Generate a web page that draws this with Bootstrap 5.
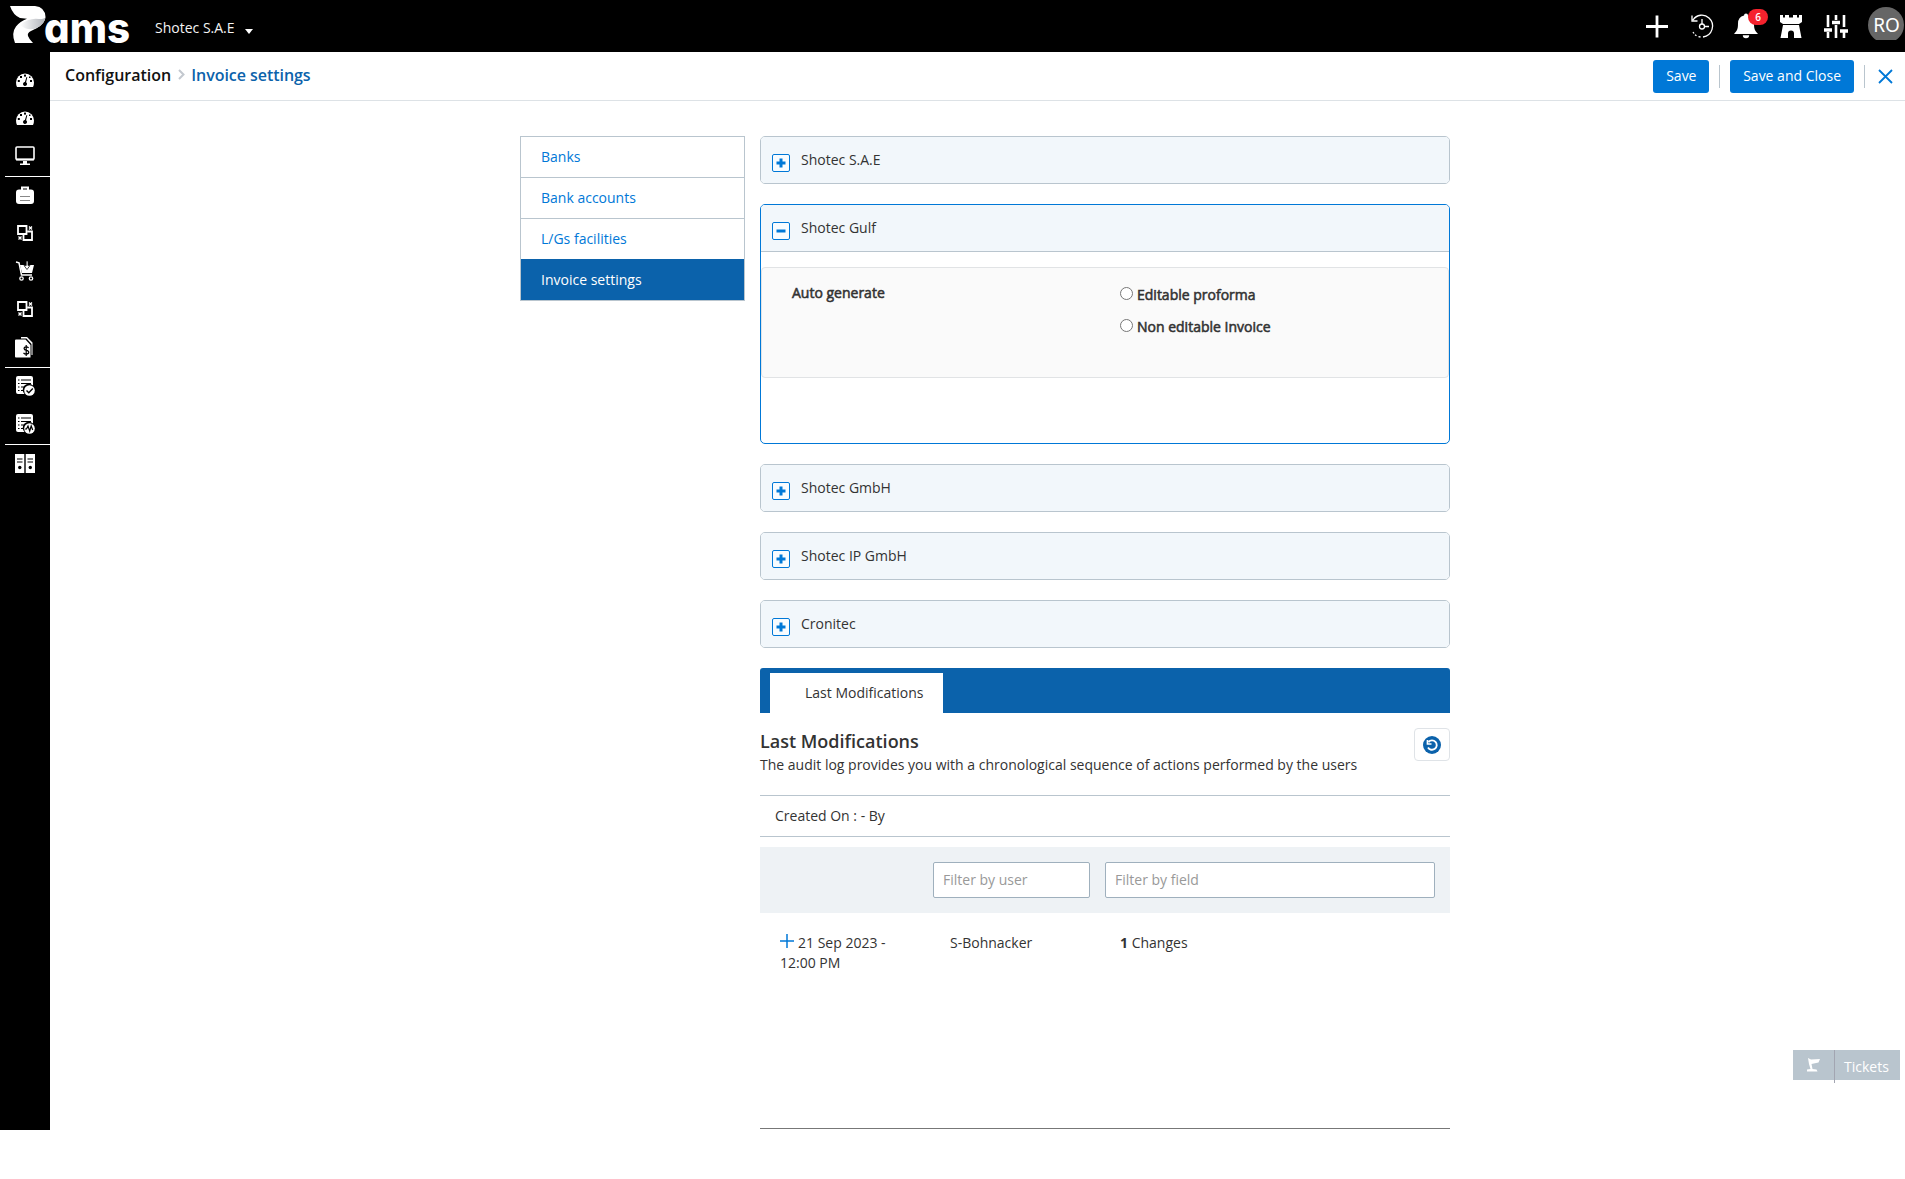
<!DOCTYPE html>
<html lang="en">
<head>
<meta charset="utf-8">
<title>Invoice settings</title>
<link href="https://cdn.jsdelivr.net/npm/bootstrap@5.3.0/dist/css/bootstrap.min.css" rel="stylesheet">
<style>
body{font-family:"Open Sans","Noto Sans",sans-serif;font-size:14px;line-height:20px;color:#333;background:#fff;height:1179px;overflow:hidden}
.topbar{height:52px;background:#000;color:#fff;padding:0 1px 0 11px}
.topbar svg{display:block;flex:none;overflow:visible}
.logo-text{font-family:Inter,"Open Sans",sans-serif;font-weight:800;font-size:41px;font-feature-settings:"cv11";fill:#fff}
.company{margin-left:24px;padding-top:4px;color:#f4f4f4}
.caret{width:0;height:0;border:4.5px solid transparent;border-top:5px solid #fff;border-bottom:0;margin:10px 0 0 10px}
.tools{gap:22px}
.bell{width:24px;margin-left:-1px}
.bell .badge{left:14px;top:-5px;width:20px;height:16px;padding:0;font-size:10px;line-height:16px;font-weight:600;background:#f5222d}
.avatar-ro{width:36px;height:33px;overflow:hidden;margin:-5px 0 0 -2px}
.avatar-ro div{width:36px;height:36px;border-radius:50%;background:#666;font-size:19px;line-height:36px;padding-left:1px;text-align:center;font-family:"Noto Sans",sans-serif}
.shell{height:1078px}
.side{width:50px;height:1078px;background:#000;flex:none;padding-top:9px}
.side a{height:38px;display:flex;align-items:center;justify-content:center}
.side .rule{height:1px;margin-left:5px;background:#fff;position:relative;top:1px}
.crumbs{height:49px;border-bottom:1px solid #dde2e6;padding:0 12px 0 15px;font-size:16px;font-weight:600;color:#111}
.trail{padding-bottom:3px}
.crumbs .here{color:#0b62ab;font-size:16px;letter-spacing:-.05px;padding-top:1px}
.btn-main{background:#0078d7;color:#fff;border-radius:3px;font-size:14px;line-height:20px;padding:6px 13px;border:0;height:33px}
.vline{width:1px;height:23px;background:#b9c5ce}
.content-area{padding:35px 0 0 470px;gap:15px}
.list-group.menu{width:225px;--bs-list-group-border-radius:0;--bs-list-group-border-color:#b9c5ce}
.menu .list-group-item{height:41px;padding:10px 20px 8px;color:#0078d7}
.menu .list-group-item:first-child{height:42px}
.menu .list-group-item.active{background:#0b62ab;color:#fff;border-color:#b9c5ce;margin-top:0;border-top:0}
.menu .list-group-item:nth-child(3){height:40px;border-bottom:0}
.menu .list-group-item:last-child{height:42px;padding-top:11px}
.main-col{width:690px}
.panel{border:1px solid #b9c5ce;border-radius:5px;margin-bottom:20px;overflow:hidden}
.panel-top{height:46px;background:#f2f7fb;padding:0 11px;display:flex}
.panel-top svg{margin:17px 11px 0 0}
.panel-top span{padding-top:13px}
.panel.open{border-color:#0078d7;height:240px}
.open .panel-top{height:47px;border-bottom:1px solid #b9c5ce}
.well-box{margin-top:15px;height:111px;border:1px solid #e1e3e5;border-radius:4px;background:#fafafa;padding:15px 30px}
.fake-bold{-webkit-text-stroke:.55px #333}
.opt{height:32px;display:flex;align-items:flex-start}
.opt input{width:13px;height:13px;margin:4px 4px 0 0}
.opt span{padding-top:2px}
.tabs{height:45px;background:#0b62ab;border-radius:3px 3px 0 0;padding:5px 10px 0}
.tabs a{display:block;width:173px;height:40px;background:#fff;color:#0b62ab;text-decoration:none;padding:10px 0 0 35px}
.h-last{font-size:18px;line-height:24px;font-weight:600;margin:0}
.refresh{width:36px;height:33px;border:1px solid #dfe3e7;border-radius:4px;background:#fff;padding:0;margin-top:-1px}
.created{margin-top:20px;height:42px;border-top:1px solid #b9c5ce;border-bottom:1px solid #b9c5ce;padding:10px 15px}
.filters{margin-top:10px;height:66px;background:#eef2f5;padding:15px 15px 15px 173px;gap:15px}
.filters input{height:36px;border:1px solid #9fb0bd;border-radius:2px;font-size:14px;padding:5px 9px 7px}
.filters input::placeholder{color:#999;opacity:1}
.log{height:216px;border-bottom:1px solid #777;padding:20px 20px 0}
.log>div{flex:none}
.ticket{left:1793px;top:1050px;height:30px;width:107px;background:#b9c5ce;color:#fff}
.ticket i{width:1px;height:33px;background:#a2a5b1}
</style>
<script src="https://cdn.jsdelivr.net/npm/bootstrap@5.3.0/dist/js/bootstrap.bundle.min.js"></script>
</head>
<body>
<svg width="0" height="0" class="position-absolute">
<defs>
<symbol id="gauge" viewBox="0 0 18 14"><path d="M0 9.500A9 9 0 0 1 18 9.500Q18 12 17 14H1Q0 12 0 9.500Z" fill="#fff"/><g fill="#000"><rect x="8" y="1.600" width="2" height="2"/><rect x="4" y="3" width="2" height="2"/><rect x="1.800" y="7" width="2" height="2"/><rect x="14" y="7" width="2" height="2"/><rect x="13" y="3.500" width="1.500" height="1.500"/><path d="M10.500 4l.8.300-1.200 5a2 2 0 1 1-1.200-.3z"/></g></symbol>
<symbol id="swap" viewBox="0 0 16 16"><g fill="none" stroke="#fff" stroke-width="1.800"><path d="M1 1h8.500v8H1zM10.500 6.500H15V15H6.500v-5"/><path d="M12 1.500l3 3M15 1.500l-3 3M1.500 11.500l3 3M4.500 11.500l-3 3" stroke-width="1.300"/></g></symbol>
<symbol id="sheet" viewBox="0 0 19 20"><path d="M2 0h13a2 2 0 0 1 2 2v7.500a6 6 0 0 0-8.500 8.500H2a2 2 0 0 1-2-2V2a2 2 0 0 1 2-2z" fill="#fff"/><path d="M2 4h1.500M5 4h10M2 7.500h1.500M5 7.500h10M2 11h1.500M5 11h4M2 14.500h1.500M5 14.500h3" stroke="#000" stroke-width="1.200"/><circle cx="13.500" cy="14.500" r="5.300" fill="#fff"/></symbol>
<symbol id="plusbox" viewBox="0 0 18 18"><rect x=".5" y=".5" width="17" height="17" rx="1.500" fill="#f8fcff" stroke="#0078d7"/><path d="M4.500 9h9M9 4.500v9" stroke="#0078d7" stroke-width="3"/></symbol>
</defs></svg>
<header class="topbar d-flex align-items-center justify-content-between">
<div class="d-flex align-items-center">
<svg width="120" height="40" viewBox="0 0 120 40"><defs><linearGradient id="lg" x1="0" x2="1"><stop offset="0" stop-color="#fff"/><stop offset="1" stop-color="#aeb2b8"/></linearGradient></defs><path d="M-1 0H24Q34 1 34.500 11 34 18 25 22.500L20 25Q16 27 17 30 18 33 22 37H4Q0 27 5 20.500 9 15.500 16 12.800L9 12Q2 9-1 0Z" fill="#fff"/><path d="M9 19Q18 11.500 28 13 34 13 34.500 11 34 18 25 22.500 16 25 9 19Z" fill="url(#lg)"/><text x="33" y="37" textLength="86" lengthAdjust="spacingAndGlyphs" class="logo-text">ams</text></svg>
<div class="company">Shotec S.A.E</div><div class="caret"></div>
</div>
<div class="tools d-flex align-items-center">
<svg width="24" height="24" viewBox="0 0 24 24"><path d="M1 12.500h22M12 1.500v22" stroke="#fff" stroke-width="2.800"/></svg>
<svg width="22" height="24" viewBox="0 0 22 24"><g fill="none" stroke="#fff" stroke-width="1.300"><path d="M2 6A10.500 10.500 0 0 1 18 4a11 11 0 0 1-6 19M9.500 23l-2-.4M5.500 21.800l-1.500-1M3 19.500l-1-1.500M1 1.500V7h5.500"/><circle cx="11" cy="12.500" r="2.500"/><path d="M11 5v5M13.500 12.500H18"/></g></svg>
<div class="bell position-relative"><svg width="24" height="24" viewBox="0 0 24 24"><path d="M10 1.500a2 2 0 0 1 4 0q6 1.500 6 8c0 6 1 7 4 10.500H0C3 16.500 4 15.500 4 9.500q0-6.500 6-8zM8.800 21.200h6.400a3.200 3 0 0 1-6.400 0z" fill="#fff"/></svg><span class="badge rounded-pill position-absolute">6</span></div>
<svg width="22" height="24" viewBox="0 0 22 24"><path d="M0 1h3v2.500h2V1h4v2.500h4V1h4v2.500h2V1h3v7l-3 2H3L0 8zM3 11h16L21.500 24H14v-4.500a3 3 0 0 0-6 0V24H.500z" fill="#fff"/></svg>
<svg width="24" height="24" viewBox="0 0 24 24"><path d="M4 1v12M4 18v6M12 1v5M12 11v13M20 1v12M20 18v6" stroke="#fff" stroke-width="2.600"/><path d="M0 16h8M8 8.500h8M16 17h8" stroke="#fff" stroke-width="3.600"/></svg>
<div class="avatar-ro"><div>RO</div></div>
</div>
</header>
<div class="shell d-flex">
<nav class="side">
<a><svg width="18" height="14"><use href="#gauge"/></svg></a>
<a><svg width="18" height="14"><use href="#gauge"/></svg></a>
<a><svg width="20" height="20" viewBox="0 0 20 20"><rect x="1" y="1" width="18" height="12.500" rx="1" fill="none" stroke="#fff" stroke-width="1.600"/><path d="M1 12.500h18v2H1zM8 15h4v2.500h3V19H5v-1.500h3z" fill="#fff"/></svg></a>
<div class="rule"></div>
<a><svg width="18" height="18" viewBox="0 0 18 18"><path d="M6 4V1.500h6V4" fill="none" stroke="#fff" stroke-width="2"/><rect y="3.500" width="18" height="14.500" rx="3" fill="#fff"/><path d="M4 10.500h10M4 14.500h10" stroke="#888"/></svg></a>
<a><svg width="16" height="16"><use href="#swap"/></svg></a>
<a><svg width="20" height="20" viewBox="0 0 20 20"><path d="M1 1l3 .8L6.500 14H17" fill="none" stroke="#fff" stroke-width="1.500"/><path d="M5 4h5l2 2 2-2h5l-2 8H7z" fill="#fff"/><path d="M11.200 0h1.800v4.500h2L12 8.500 9 4.500h2.200z" fill="#fff" stroke="#000" stroke-width=".7"/><circle cx="6.500" cy="17.500" r="1.700" fill="none" stroke="#fff" stroke-width="1.300"/><circle cx="16" cy="17.500" r="1.700" fill="none" stroke="#fff" stroke-width="1.300"/></svg></a>
<a><svg width="16" height="16"><use href="#swap"/></svg></a>
<a><svg width="20" height="21" viewBox="0 0 20 21"><path d="M6 0h6l5.500 5.500V18H16.500V7l-5-5.500H6z" fill="#fff"/><path d="M1 2.500h9.500L15.500 8v12.500H1a1 1 0 0 1-1-1v-16a1 1 0 0 1 1-1z" fill="#fff"/><path d="M13.600 11q-1-1.300-2.500-1.200-2.100.2-2 1.800.2 1.400 2.200 1.700 2.500.4 2.500 2t-2.500 1.900q-1.800 0-2.800-1.400M11.200 8v11" fill="none" stroke="#000" stroke-width="1.200"/></svg></a>
<div class="rule"></div>
<a><svg width="19" height="20" viewBox="0 0 19 20"><use href="#sheet"/><path d="M10.500 14.500l2.300 2.300 4-4.300" fill="none" stroke="#000" stroke-width="1.400"/></svg></a>
<a><svg width="19" height="20" viewBox="0 0 19 20"><use href="#sheet"/><path d="M9 15h1.500l1.500-3 1.700 5 1.500-5 1.500 4" fill="none" stroke="#000" stroke-width="1.200"/></svg></a>
<div class="rule"></div>
<a><svg width="20" height="20" viewBox="0 0 20 20"><path d="M0 1h9.300v19H0zM10.700 1H20v19h-9.300z" fill="#fff"/><path d="M2 6h5.500M2 9h5.500M12.500 6H18M12.500 9H18" stroke="#000" stroke-width="1.200"/><circle cx="4.800" cy="14.500" r="1.700"/><circle cx="15.300" cy="14.500" r="1.700"/></svg></a>
</nav>
<main class="flex-grow-1">
<div class="crumbs d-flex align-items-center justify-content-between">
<div class="trail d-flex align-items-center"><span>Configuration</span><svg style="margin:0 6px 0 7px" width="7" height="11" viewBox="0 0 7 11"><path d="M1 1l4.500 4.500L1 10" fill="none" stroke="#c3c8cf" stroke-width="2"/></svg><span class="here">Invoice settings</span></div>
<div class="d-flex align-items-center"><button class="btn btn-main" style="width:56px">Save</button><div class="vline" style="margin:0 10px"></div><button class="btn btn-main">Save and Close</button><div class="vline" style="margin:0 13px 0 10px"></div><svg width="15" height="15" viewBox="0 0 15 15"><path d="M1 1l13 13M14 1L1 14" stroke="#0078d7" stroke-width="1.800"/></svg></div>
</div>
<div class="content-area d-flex align-items-start">
<div class="list-group menu">
<a class="list-group-item">Banks</a><a class="list-group-item">Bank accounts</a><a class="list-group-item">L/Gs facilities</a><a class="list-group-item active">Invoice settings</a>
</div>
<div class="main-col">
<div class="panel"><div class="panel-top"><svg width="18" height="18"><use href="#plusbox"/></svg><span>Shotec S.A.E</span></div></div>
<div class="panel open"><div class="panel-top"><svg width="18" height="18" viewBox="0 0 18 18"><rect x=".5" y=".5" width="17" height="17" rx="1.500" fill="#f8fcff" stroke="#0078d7"/><path d="M4.500 9h9" stroke="#0078d7" stroke-width="3"/></svg><span>Shotec Gulf</span></div>
<div class="well-box d-flex"><div class="fake-bold" style="width:328px">Auto generate</div><div class="fake-bold"><label class="opt"><input type="radio" name="g"><span>Editable proforma</span></label><label class="opt"><input type="radio" name="g"><span>Non editable Invoice</span></label></div></div></div>
<div class="panel"><div class="panel-top"><svg width="18" height="18"><use href="#plusbox"/></svg><span>Shotec GmbH</span></div></div>
<div class="panel"><div class="panel-top"><svg width="18" height="18"><use href="#plusbox"/></svg><span>Shotec IP GmbH</span></div></div>
<div class="panel"><div class="panel-top"><svg width="18" height="18"><use href="#plusbox"/></svg><span>Cronitec</span></div></div>
<div class="tabs"><a>Last Modifications</a></div>
<div class="d-flex justify-content-between" style="padding-top:16px"><div><h2 class="h-last">Last Modifications</h2><div style="padding-top:2px">The audit log provides you with a chronological sequence of actions performed by the users</div></div>
<button class="refresh d-flex align-items-center justify-content-center"><svg width="18" height="18" viewBox="0 0 18 18"><circle cx="9" cy="9" r="9" fill="#0b62ab"/><path d="M5.500 6a4.700 4.700 0 1 1-.5 5.500" fill="none" stroke="#fff" stroke-width="1.900"/><path d="M4.500 4v4H8.500" fill="none" stroke="#fff" stroke-width="1.700"/></svg></button></div>
<div class="created">Created On : - By</div>
<div class="filters d-flex"><input style="width:157px" placeholder="Filter by user"><input style="width:330px" placeholder="Filter by field"></div>
<div class="log d-flex"><div style="width:170px"><svg width="14" height="14" viewBox="0 0 14 14" style="margin:-7px 4px 0 0"><path d="M0 7h14M7 0v14" stroke="#0078d7" stroke-width="1.500"/></svg>21 Sep 2023 -<br>12:00 PM</div><div style="width:170px">S-Bohnacker</div><div><b>1</b> Changes</div></div>
</div>
</div>
</main>
</div>
<div class="ticket position-absolute d-flex"><svg width="41" height="30" viewBox="0 0 41 30"><path d="M15 8l3 1.500 9-.5-1.500 3.500-7 1.500 1 5 4 .5 1 2H14v-2l3.500-.5-1.500-5z" fill="#fff"/></svg><i></i><span style="padding:7px 0 0 9px">Tickets</span></div>
</body>
</html>
